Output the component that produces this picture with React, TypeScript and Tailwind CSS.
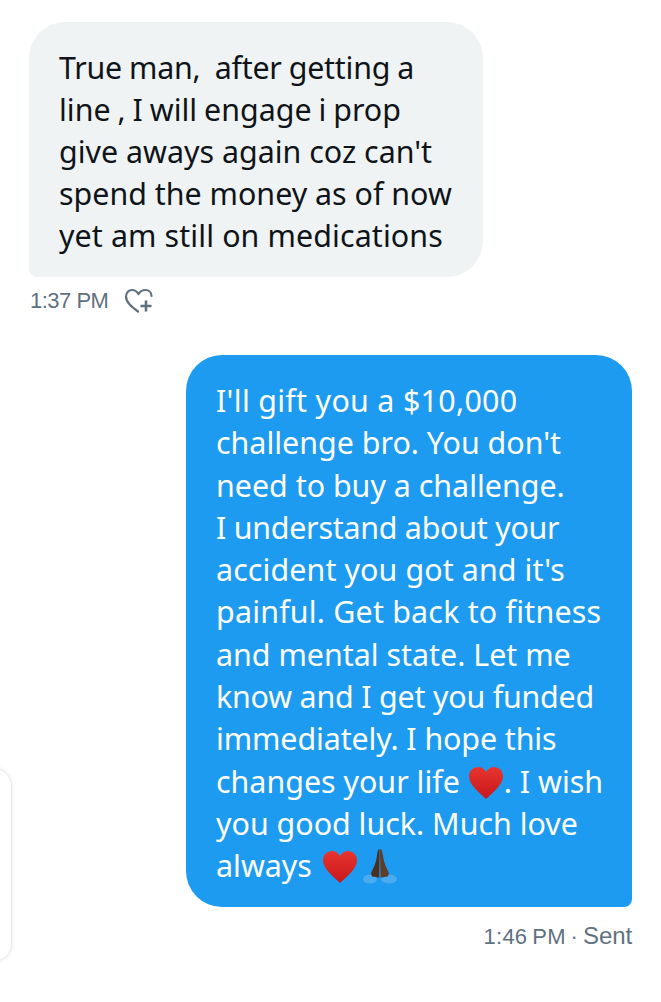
const Heart = ({ className = "" }: { className?: string }) => (
  <svg viewBox="0 0 36 34" className={`inline-block w-[36px] h-[34px] align-[-7px] ${className}`}>
    <defs>
      <linearGradient id="h" x1="0" y1="0" x2="0" y2="1">
        <stop offset="0" stopColor="#e8352f" />
        <stop offset="1" stopColor="#c8161c" />
      </linearGradient>
    </defs>
    <path d="M18 33C12 27 1 19 1 10.500C1 4.500 5.500 1 10 1C13.500 1 16.500 3 18 6C19.500 3 22.500 1 26 1C30.500 1 35 4.500 35 10.500C35 19 24 27 18 33Z" fill="url(#h)" />
  </svg>
);

const Pray = () => (
  <svg viewBox="0 0 36 36" className="inline-block w-[36px] h-[36px] align-[-7px] ml-[4px]">
    <ellipse cx="8" cy="31" rx="7" ry="4.500" fill="#6bb6f0" opacity="0.6" />
    <ellipse cx="27" cy="31" rx="8" ry="4.500" fill="#6bb6f0" opacity="0.6" />
    <path d="M17.500 1C15.800 1 15.500 4 14.800 9C14 15 11.500 20 9.500 24C8.500 26.500 10 29 12 28.800C14 28.600 15.500 30 17.300 29.500L17.500 8Z" fill="#4b3022" />
    <path d="M18 1C19.700 1 20.500 4 21.200 9C22 15 24.500 20 26.500 24C27.500 26.500 26 29 24 28.800C22 28.600 20.500 30 18.700 29.500L18 8Z" fill="#5e3d2c" />
  </svg>
);

const HeartPlus = () => (
  <svg viewBox="0 0 30 26" fill="none" stroke="#5f7180" strokeWidth="2.200" strokeLinecap="round" strokeLinejoin="round" className="w-[30px] h-[26px]">
    <path d="M14 23.500C8 19 2 14.500 2 8.500C2 4.500 5 2 8 2C11 2 13 3.500 14.500 6C16 3.500 18.500 2 21.500 2C25 2 27.500 4.500 27.500 8" />
    <path d="M22 12.500V23.500M16.500 18H27.500" strokeWidth="2.600" strokeLinecap="butt" />
  </svg>
);

export default function App() {
  return (
    <div className="relative w-[661px] h-[1002px] overflow-hidden bg-white font-['Noto_Sans','Open_Sans',sans-serif]">
      <div className="absolute left-[-30px] top-[768px] w-[42px] h-[194px] rounded-[18px] bg-white border border-[#e9e9e9] shadow-[0_0_4px_rgba(0,0,0,0.08)]" />
      <div className="flex flex-col pt-[22px] pl-[29px] pr-[29px]">
        <div className="w-[454px] h-[255px] rounded-[36px] rounded-bl-[8px] bg-[#eff3f4] pl-[30px] pt-[25px] text-[#0f1419] text-[30.400px] leading-[42px] whitespace-nowrap">
          <span className="tracking-[-0.25px] [word-spacing:-0.500px]">True man,&nbsp; after getting a</span><br />
          <span className="[word-spacing:-1px]">line , I will engage i prop</span><br />
          give aways again coz can't<br />
          spend the money as of now<br />
          <span className="tracking-[0.1px]">yet am still on medications</span>
        </div>
        <div className="flex items-center gap-[16px] mt-[9px] pl-[1px] h-[30px]">
          <span className="text-[22px] tracking-[-0.5px] leading-[30px] text-[#5f7180] font-['Liberation_Sans',sans-serif]">1:37 PM</span>
          <HeartPlus />
        </div>
        <div className="self-end mt-[39px] w-[446px] h-[552px] rounded-[36px] rounded-br-[8px] bg-[#1d9bf0] pl-[30px] pt-[25px] text-white text-[30.400px] leading-[42.300px] whitespace-nowrap">
          <span className="tracking-[0.3px]">I'll gift you a $10,000</span><br />
          challenge bro. You don't<br />
          need to buy a challenge.<br />
          <span className="tracking-[-0.25px]">I understand about your</span><br />
          <span className="tracking-[0.1px]">accident you got and it's</span><br />
          <span className="tracking-[0.2px]">painful. Get back to fitness</span><br />
          and mental state. Let me<br />
          <span className="tracking-[-0.2px]">know and I get you funded</span><br />
          <span className="tracking-[-0.1px]">immediately. I hope this</span><br />
          changes your life <Heart />. I wish<br />
          you good luck. Much love<br />
          always <Heart className="ml-[2px]" /><Pray />
        </div>
        <div className="self-end mt-[14px] text-[22px] tracking-[0.25px] [word-spacing:-1.500px] leading-[30px] text-[#5f7180] font-['Liberation_Sans',sans-serif]">1:46 PM · <span className="text-[24px] tracking-[-0.1px]">Sent</span></div>
      </div>
    </div>
  );
}
